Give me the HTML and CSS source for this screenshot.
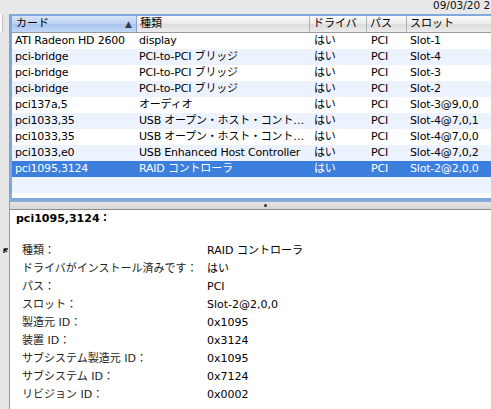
FILE: index.html
```html
<!DOCTYPE html>
<html lang="ja">
<head>
<meta charset="utf-8">
<link rel="stylesheet" href="styles.css">
</head>
<body>
<div class="top"><span class="date">09/03/20 2</span></div>
<div class="main">
  <div class="leftstrip">
    <div class="stub"></div>
    <svg class="grip" width="6" height="6" viewBox="0 0 6 6"><path d="M1 5 L1 1.5 Q1 1 1.5 1 L5 1 M1 1 L4 4" stroke="#111" stroke-width="1.3" fill="none"/></svg>
  </div>
  <div class="content">
    <div class="tablewrap">
      <div class="table">
        <div class="hrow">
          <div class="hcell sorted"><span>カード</span><span class="arrow">▲</span></div>
          <div class="hcell">種類</div>
          <div class="hcell">ドライバ</div>
          <div class="hcell">パス</div>
          <div class="hcell last">スロット</div>
        </div>
        <div class="row"><div>ATI Radeon HD 2600</div><div>display</div><div>はい</div><div>PCI</div><div>Slot-1</div></div>
        <div class="row alt"><div>pci-bridge</div><div>PCI-to-PCI ブリッジ</div><div>はい</div><div>PCI</div><div>Slot-4</div></div>
        <div class="row"><div>pci-bridge</div><div>PCI-to-PCI ブリッジ</div><div>はい</div><div>PCI</div><div>Slot-3</div></div>
        <div class="row alt"><div>pci-bridge</div><div>PCI-to-PCI ブリッジ</div><div>はい</div><div>PCI</div><div>Slot-2</div></div>
        <div class="row"><div>pci137a,5</div><div>オーディオ</div><div>はい</div><div>PCI</div><div>Slot-3@9,0,0</div></div>
        <div class="row alt"><div>pci1033,35</div><div>USB オープン・ホスト・コント…</div><div>はい</div><div>PCI</div><div>Slot-4@7,0,1</div></div>
        <div class="row"><div>pci1033,35</div><div>USB オープン・ホスト・コント…</div><div>はい</div><div>PCI</div><div>Slot-4@7,0,0</div></div>
        <div class="row alt"><div>pci1033,e0</div><div>USB Enhanced Host Controller</div><div>はい</div><div>PCI</div><div>Slot-4@7,0,2</div></div>
        <div class="row selected"><div>pci1095,3124</div><div>RAID コントローラ</div><div>はい</div><div>PCI</div><div>Slot-2@2,0,0</div></div>
        <div class="row alt empty"></div>
      </div>
    </div>
    <div class="splitter"><span class="dimple"></span></div>
    <div class="detail">
      <div class="title">pci1095,3124：</div>
      <div class="props">
        <div class="label">種類：</div><div class="value">RAID コントローラ</div>
        <div class="label">ドライバがインストール済みです：</div><div class="value">はい</div>
        <div class="label">パス：</div><div class="value">PCI</div>
        <div class="label">スロット：</div><div class="value">Slot-2@2,0,0</div>
        <div class="label">製造元 ID：</div><div class="value">0x1095</div>
        <div class="label">装置 ID：</div><div class="value">0x3124</div>
        <div class="label">サブシステム製造元 ID：</div><div class="value">0x1095</div>
        <div class="label">サブシステム ID：</div><div class="value">0x7124</div>
        <div class="label">リビジョン ID：</div><div class="value">0x0002</div>
      </div>
    </div>
  </div>
</div>
</body>
</html>
```
FILE: styles.css
```css
html, body {
  margin: 0;
  padding: 0;
}
body {
  width: 491px;
  height: 409px;
  overflow: hidden;
  background: #e8e8e8;
  font-family: "DejaVu Sans", "Noto Sans CJK JP", sans-serif;
  font-size: 11px;
  color: #000;
}
.top {
  height: 14px;
  padding-left: 433px;
  white-space: nowrap;
  line-height: 11px;
  font-size: 10.5px;
  letter-spacing: 0;
  color: #111;
}
.main {
  display: flex;
  height: 395px;
}
.leftstrip {
  width: 9px;
  border-right: 1px solid #9c9c9c;
  background: #e6e6e6;
  display: flex;
  flex-direction: column;
}
.stub {
  width: 2px;
  height: 18px;
  background: #fafafa;
  border-right: 1px solid #c4c4c4;
}
.grip {
  margin-top: 216px;
  margin-left: 3px;
}
.content {
  flex: 1;
  display: flex;
  flex-direction: column;
  min-width: 0;
}
.tablewrap {
  height: 182px;
  border: 2px solid #7fa8dc;
  border-right: none;
  border-radius: 2px 0 0 2px;
  background: #fff;
  overflow: hidden;
}
.table {
  display: flex;
  flex-direction: column;
}
.hrow, .row {
  display: grid;
  grid-template-columns: 125px 173px 57px 40px 1fr;
}
.hrow {
  height: 16px;
  border-bottom: 1px solid #9a9a9a;
  background: linear-gradient(#fbfbfb, #e9e9e9 50%, #dcdcdc 51%, #ececec);
}
.hcell {
  line-height: 16px;
  padding-left: 3px;
  border-right: 1px solid #b3b3b3;
  white-space: nowrap;
  overflow: hidden;
}
.hcell.last {
  border-right: none;
}
.hcell.sorted {
  display: flex;
  justify-content: space-between;
  padding-left: 4px;
  padding-right: 4px;
  background: linear-gradient(#d6e4f7, #bdd2f0 50%, #a7c3ec 51%, #c3d8f6);
  border-right-color: #8aa4c8;
}
.arrow {
  font-size: 9px;
  color: #2d3b50;
}
.row {
  height: 16px;
  line-height: 16px;
  background: #fff;
  letter-spacing: -0.2px;
}
.row > div {
  padding-left: 3px;
  white-space: nowrap;
  overflow: hidden;
}
.row > div:nth-child(3), .row > div:nth-child(4) {
  padding-left: 4px;
}
.row > div:nth-child(2) {
  padding-left: 2px;
}
.row.alt {
  background: #edf3fe;
}
.row.selected {
  background: #3c7fdd;
  color: #fff;
}
.splitter {
  height: 7px;
  border-top: 2px solid #88acd8;
  border-bottom: 1px solid #8e8e8e;
  background: linear-gradient(#e4e4e4, #d6d6d6);
  position: relative;
}
.dimple {
  position: absolute;
  left: 254px;
  top: 2px;
  width: 3px;
  height: 3px;
  border-radius: 50%;
  background: #333;
}
.detail {
  flex: 1;
  background: #fff;
  padding: 1px 0 0 6px;
}
.title {
  font-weight: bold;
  font-size: 11px;
  line-height: 16px;
}
.props {
  display: grid;
  grid-template-columns: 185px 1fr;
  grid-auto-rows: 18px;
  margin-top: 15px;
  padding-left: 6px;
  line-height: 18px;
}
.label {
  color: #222;
  white-space: nowrap;
}
```
